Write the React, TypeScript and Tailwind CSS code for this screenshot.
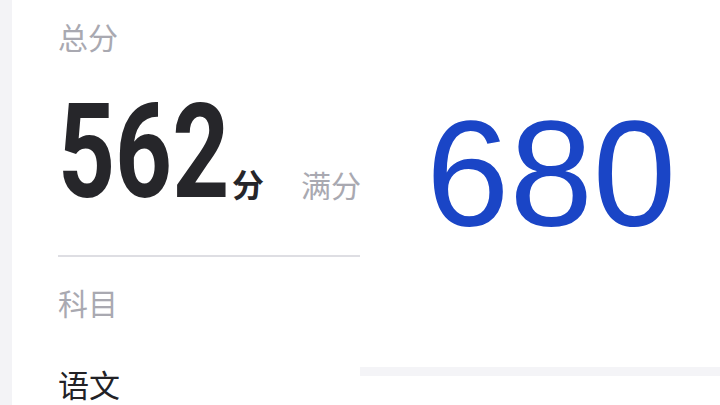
const cjk = { fontFamily: '"Noto Sans CJK SC", "Noto Sans", sans-serif' }

export default function App() {
  return (
    <div className="w-[720px] h-[405px] overflow-hidden flex bg-[#f3f3f6]">
      <div className="w-[12px] shrink-0" />
      <div className="flex-1 flex bg-white">
        {/* left column: total score + subjects */}
        <div className="w-[348px] shrink-0 pl-[46px] pt-[19px]" style={cjk}>
          <div className="text-[30px] leading-[34px] text-[#a9a9b1]">总分</div>
          <div className="mt-[34px] flex items-baseline whitespace-nowrap">
            <span className="w-[172px] shrink-0 inline-block">
              <span
                className="inline-block origin-left scale-x-[0.76] text-[131px] leading-none font-bold text-[#26262a]"
                style={{ fontFamily: 'Roboto, "Liberation Sans", sans-serif' }}
              >
                562
              </span>
            </span>
            <span className="shrink-0 ml-[2px] text-[32px] font-bold text-[#26262a]">分</span>
            <span className="shrink-0 ml-[37px] text-[30px] text-[#a9a9b1]">满分</span>
          </div>
          <div className="mt-[37px] h-[2px] bg-[#dedee3]" />
          <div className="mt-[28px] text-[30px] leading-[34px] text-[#a9a9b1]">科目</div>
          <div className="mt-[47px] text-[31px] leading-[36px] text-[#222226]">语文</div>
        </div>
        {/* right column: full marks */}
        <div className="flex-1">
          <div className="pt-[99px] pl-[66px]">
            <span
              className="text-[150px] leading-none text-[#1a45c6]"
              style={{ fontFamily: '"Liberation Sans", Arial, sans-serif' }}
            >
              680
            </span>
          </div>
          <div className="mt-[118px] h-[9px] bg-[#f4f4f7]" />
        </div>
      </div>
    </div>
  )
}
